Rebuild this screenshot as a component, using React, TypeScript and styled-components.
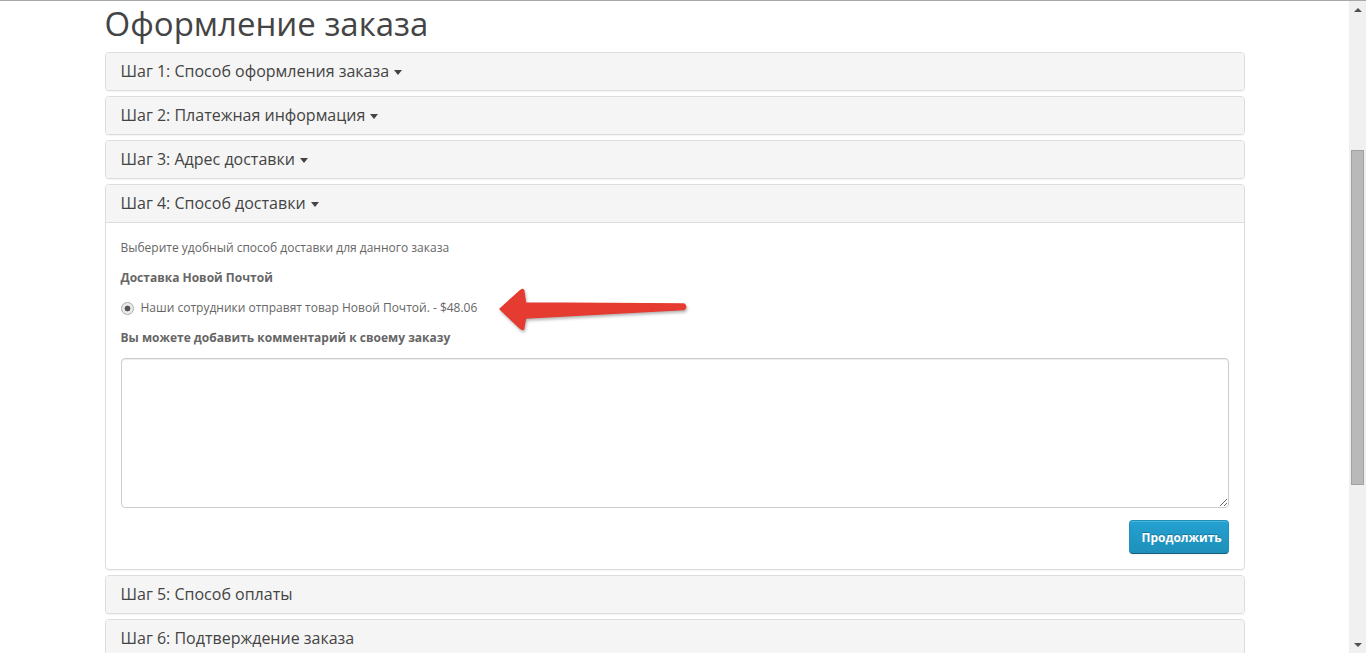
import React from "react";
import styled, { createGlobalStyle } from "styled-components";

const GlobalStyle = createGlobalStyle`
  html, body {
    margin: 0;
    padding: 0;
    height: 653px;
    overflow: hidden;
    background: #fff;
  }
  body {
    font-family: "Open Sans", "Noto Sans", sans-serif;
    font-size: 12px;
    line-height: 20px;
    color: #666;
  }
  * { box-sizing: border-box; }
`;

const Window = styled.div`
  height: 653px;
  border-top: 1px solid #a8a8a8;
  display: flex;
`;

const Viewport = styled.div`
  flex: 1;
  min-width: 0;
  overflow: hidden;
`;

const Container = styled.div`
  width: 1140px;
  margin: 0 auto;
  padding-top: 5px;
`;

const Title = styled.h1`
  margin: 0 0 10px;
  font-size: 33px;
  line-height: 36px;
  font-weight: 400;
  color: #444;
`;

const PanelGroup = styled.div`
  display: flex;
  flex-direction: column;
  gap: 5px;
`;

const Panel = styled.div`
  border: 1px solid #ddd;
  border-radius: 4px;
  background: #fff;
  box-shadow: 0 1px 1px rgba(0, 0, 0, 0.05);
`;

const PanelHeading = styled.div<{ $open?: boolean }>`
  background: #f5f5f5;
  padding: 10px 15px;
  border-radius: ${(p) => (p.$open ? "3px 3px 0 0" : "3px")};
  border-bottom: ${(p) => (p.$open ? "1px solid #ddd" : "none")};
`;

const PanelTitle = styled.h4`
  margin: 0;
  font-size: 16px;
  line-height: 17px;
  font-weight: 400;
  color: #444;
  display: flex;
  align-items: center;
`;

const Caret = styled.span`
  display: inline-block;
  margin-left: 5px;
  margin-top: 1px;
  width: 0;
  height: 0;
  border-left: 4px solid transparent;
  border-right: 4px solid transparent;
  border-top: 5px solid #444;
`;

const PanelBody = styled.div`
  padding: 15px;
  display: flex;
  flex-direction: column;
`;

const Text = styled.p<{ $bold?: boolean }>`
  margin: 0 0 10px;
  font-weight: ${(p) => (p.$bold ? 700 : 400)};
  color: #666;
`;

const RadioRow = styled.div`
  position: relative;
  margin: 0 0 10px;
  height: 20px;
  display: flex;
  align-items: center;
  gap: 7px;
`;

const RadioDot = styled.span`
  width: 13px;
  height: 13px;
  border-radius: 50%;
  border: 1px solid #a9a9a9;
  background: radial-gradient(circle, #555 0 2.6px, #e6e6e6 3.2px, #f4f4f4 100%);
  flex: none;
`;

const Arrow = styled.svg`
  position: absolute;
  left: 374px;
  top: -14px;
  width: 200px;
  height: 52px;
  overflow: visible;
  filter: drop-shadow(1px 2px 1.5px rgba(0, 0, 0, 0.3));
`;

const Comment = styled.textarea`
  display: block;
  width: 100%;
  height: 150px;
  margin: 0 0 12px;
  padding: 6px 12px;
  border: 1px solid #ccc;
  border-radius: 4px;
  box-shadow: inset 0 1px 1px rgba(0, 0, 0, 0.075);
  resize: vertical;
  font-family: inherit;
  font-size: 12px;
  outline: none;
`;

const Buttons = styled.div`
  display: flex;
  justify-content: flex-end;
`;

const PrimaryButton = styled.button`
  height: 34px;
  width: 100px;
  padding: 0 12px;
  font-family: "Open Sans", "Noto Sans", sans-serif;
  font-size: 12px;
  font-weight: 700;
  color: #fff;
  text-shadow: 0 -1px 0 rgba(0, 0, 0, 0.25);
  background-color: #229ac8;
  background-image: linear-gradient(to bottom, #23a1d1, #1f90bb);
  border: 1px solid;
  border-color: #1f90bb #1f90bb #145e7a;
  border-radius: 4px;
  box-shadow: inset 0 1px 0 rgba(255, 255, 255, 0.2), 0 1px 2px rgba(0, 0, 0, 0.05);
  cursor: pointer;
`;

const Scrollbar = styled.div`
  width: 17px;
  flex: none;
  background: #f0f0f0;
  display: flex;
  flex-direction: column;
`;

const ScrollArrow = styled.div<{ $dir: "up" | "down" }>`
  height: 17px;
  display: flex;
  align-items: center;
  justify-content: center;
  &::before {
    content: "";
    width: 0;
    height: 0;
    border-left: 4px solid transparent;
    border-right: 4px solid transparent;
    ${(p) =>
      p.$dir === "up"
        ? "border-bottom: 4px solid #505050;"
        : "border-top: 4px solid #505050;"}
  }
`;

const Track = styled.div`
  flex: 1;
  padding: 0 2px;
`;

const Thumb = styled.div`
  margin-top: 132px;
  height: 335px;
  background: #b9b9b9;
  border: 1px solid #a2a2a2;
`;

const steps = [
  { n: 1, title: "Способ оформления заказа" },
  { n: 2, title: "Платежная информация" },
  { n: 3, title: "Адрес доставки" },
];

export default function App() {
  return (
    <>
      <GlobalStyle />
      <Window>
        <Viewport>
          <Container>
            <Title>Оформление заказа</Title>
            <PanelGroup>
              {steps.map((s) => (
                <Panel key={s.n}>
                  <PanelHeading>
                    <PanelTitle>
                      Шаг {s.n}: {s.title}
                      <Caret />
                    </PanelTitle>
                  </PanelHeading>
                </Panel>
              ))}
              <Panel>
                <PanelHeading $open>
                  <PanelTitle>
                    Шаг 4: Способ доставки
                    <Caret />
                  </PanelTitle>
                </PanelHeading>
                <PanelBody>
                  <Text>Выберите удобный способ доставки для данного заказа</Text>
                  <Text $bold>Доставка Новой Почтой</Text>
                  <RadioRow>
                    <RadioDot />
                    <span>Наши сотрудники отправят товар Новой Почтой. - $48.06</span>
                    <Arrow viewBox="0 0 200 52">
                      <path
                        d="M5 25 L25.5 6.5 Q29 4 29 8.5 L30.5 19 L189 20 Q192.5 22.5 189 25.5 L30.5 34 L29 42.5 Q29 47 25.5 44.5 Z"
                        fill="#e53b30"
                        stroke="#e53b30"
                        strokeWidth="1.5"
                        strokeLinejoin="round"
                      />
                    </Arrow>
                  </RadioRow>
                  <Text $bold>Вы можете добавить комментарий к своему заказу</Text>
                  <Comment readOnly />
                  <Buttons>
                    <PrimaryButton type="button">Продолжить</PrimaryButton>
                  </Buttons>
                </PanelBody>
              </Panel>
              <Panel>
                <PanelHeading>
                  <PanelTitle>Шаг 5: Способ оплаты</PanelTitle>
                </PanelHeading>
              </Panel>
              <Panel>
                <PanelHeading>
                  <PanelTitle>Шаг 6: Подтверждение заказа</PanelTitle>
                </PanelHeading>
              </Panel>
            </PanelGroup>
          </Container>
        </Viewport>
        <Scrollbar>
          <ScrollArrow $dir="up" />
          <Track>
            <Thumb />
          </Track>
          <ScrollArrow $dir="down" />
        </Scrollbar>
      </Window>
    </>
  );
}
